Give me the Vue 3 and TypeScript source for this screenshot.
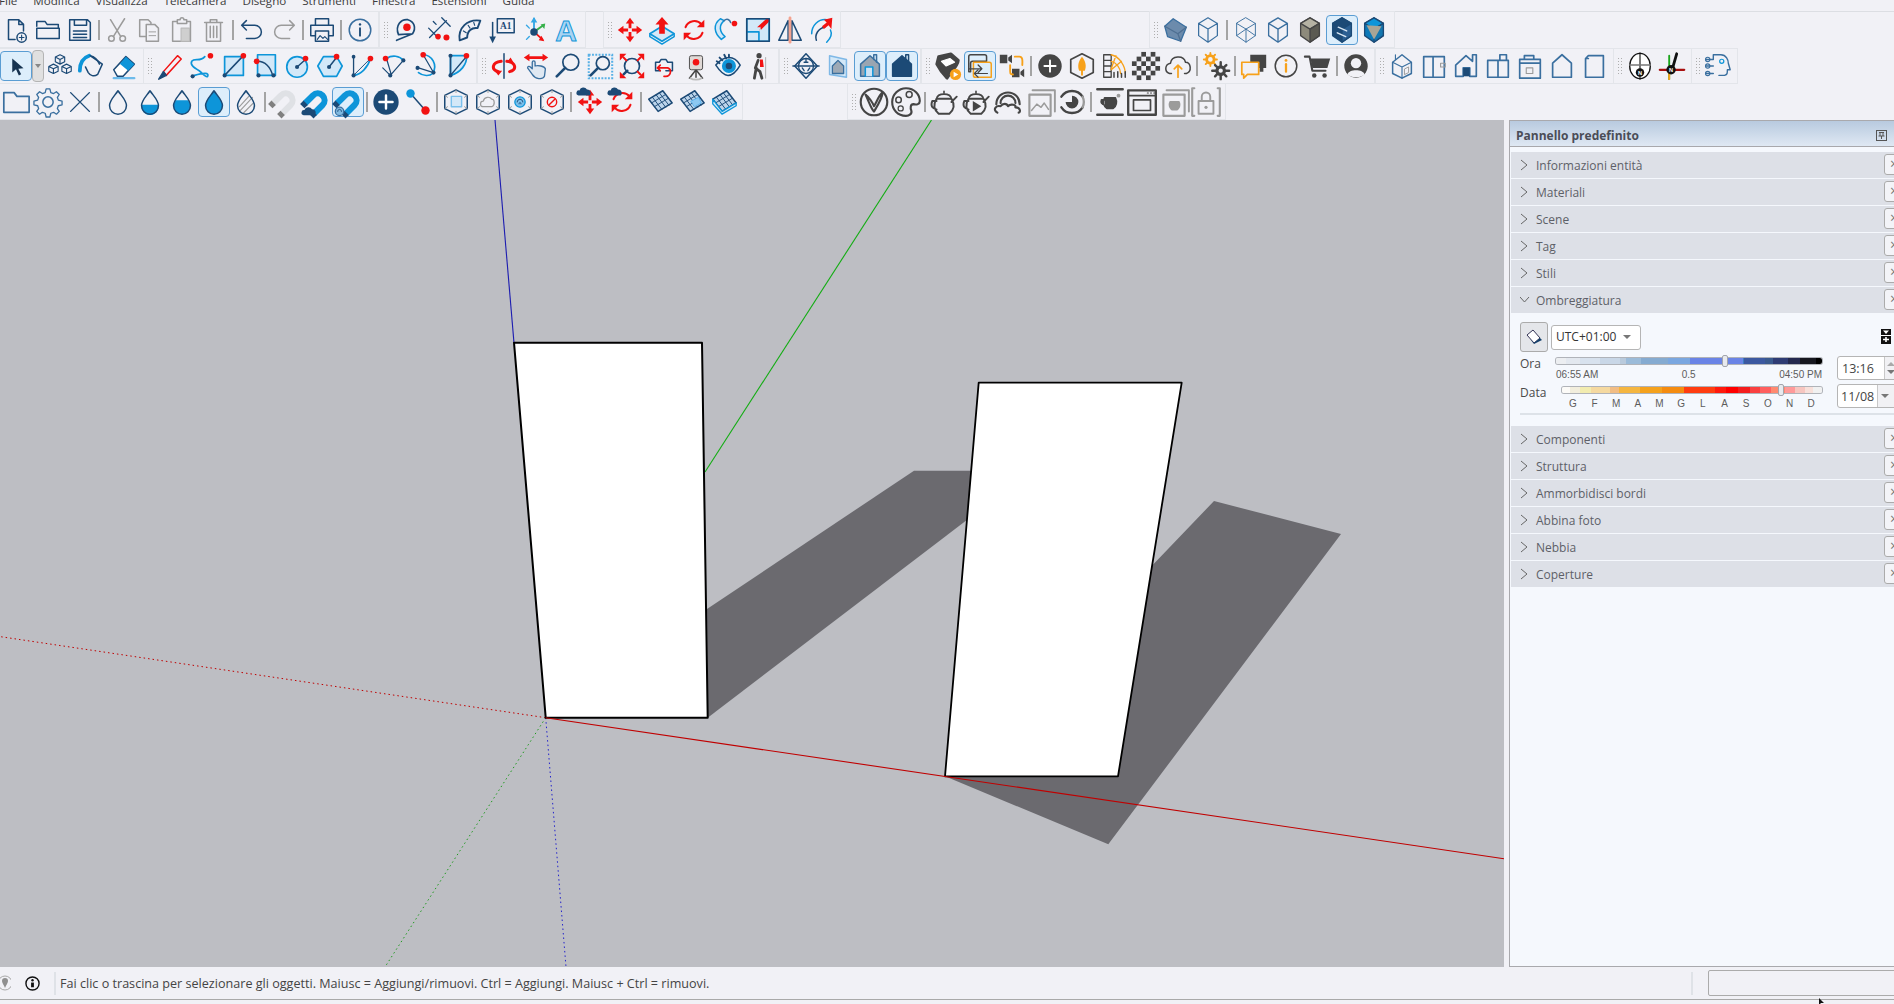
<script setup lang="ts">
interface Group {
  gap: number
  width: number
  handle?: boolean
  size?: number
  items: string[]
}

const N = '#1c4a76'
const S = '#3a6f9f'
const B = '#0d95d9'
const L = '#d3e8f8'
const R = '#f21212'
const G = '#9b9b9b'
const K = '#454545'
const O = '#f7a11a'

const l = (d: string, c = N, w = 1.6, f = 'none') =>
  `<path d="${d}" fill="${f}" stroke="${c}" stroke-width="${w}" stroke-linejoin="round" stroke-linecap="round"/>`
const f = (d: string, c = N) => `<path d="${d}" fill="${c}"/>`
const dot = (x: number, y: number, r = 2, c = N) => `<circle cx="${x}" cy="${y}" r="${r}" fill="${c}"/>`
const ring = (x: number, y: number, r: number, c = N, w = 1.6, fl = 'none') =>
  `<circle cx="${x}" cy="${y}" r="${r}" fill="${fl}" stroke="${c}" stroke-width="${w}"/>`
const spin = (body: string, a: number) => `<g transform="rotate(${a} 16 16)">${body}</g>`

const arrow4 = (() => {
  const a = f('M16 3l4.500 6h-3v5h-3V9h-3z', R)
  return a + spin(a, 90) + spin(a, 180) + spin(a, 270)
})()
const rotArrows = l('M7 13a10 10 0 0 1 17-3', R, 2.2) + f('M27 5v8h-8z', R) + l('M25 19a10 10 0 0 1-17 3', R, 2.2) + f('M5 27v-8h8z', R)
const cube = (top: string, left: string, right: string, c = S) =>
  l('M16 3l10 6v13l-10 7-10-7V9z', c, 1.4, left) + l('M16 3l10 6-10 6-10-6z', c, 1.4, top) + l('M16 15l10-6v13l-10 7z', c, 1.4, right)
const hex = (inner: string) => l('M16 3l12 6v14l-12 6-12-6V9z', N, 1.6) + l('M16 3v3M4 9l3 2M28 9l-3 2M16 29v-3M4 23l3-2M28 23l-3-2', G, 1) + inner
const drop = (inner: string) => inner + l('M16 4c4 6 9 10 9 16a9 9 0 0 1-18 0c0-6 5-10 9-16z')
const horseshoe = 'M7 17L14 10a6 6 0 0 1 8.500 8.500L15 26'
const magnet = (c: string, d: string) =>
  `<g transform="translate(-4 -3) scale(1.2)"><path d="${horseshoe}" fill="none" stroke="${c}" stroke-width="5.500"/>` +
  `<path d="M7.500 16.500L4.500 19.500M15.500 25.500L12.500 28.500" fill="none" stroke="${d}" stroke-width="5.500"/></g>`
const cloud = (x: number, y: number, s: number) =>
  `<g transform="translate(${x} ${y}) scale(${s})">${f('M2 10a3 3 0 0 1 1-6 5 5 0 0 1 9-1 4 4 0 0 1 3 7z')}</g>`
const gridPlane = (extra: string) =>
  l('M4 13L19 4l10 13-15 9z', N, 1.6, '#bcd4ea') + l('M8 11l10 13M12 8.500l10 13M15.500 6.500l10 13M7 17l15-9M10 21l15-9', N, 1) + extra
const house = (fl: string, c = N) => l('M6 14l10-9 10 9v13H6z', c, 1.6, fl) + l('M20 9V4h3v8', c, 1.6)
const teapot = (inner = '') =>
  l('M9 13h14c3 5 3 10-2 14H11c-5-4-5-9-2-14zM9 15H5c-2 5 0 7 4 8M23 16l5-5', K, 1.8) + l('M9 13c1-6 13-6 14 0M16 6v1', K, 1.6) + inner
const arcBase = l('M7 6v20', N, 1.4)

const icons: Record<string, string> = {
  new: l('M19 5H8v21h7M19 5l5 5v7M19 5v5h5') + ring(22, 24, 5) + l('M22 21.500v5M19.500 24h5', N, 1.2),
  open: l('M4 12V7h9l2 3h12v3M4 14h24v11H4z'),
  save: l('M5 5h19l3 3v19H5zM10 5v6h13V5M9 17h14M9 20.500h14M9 24h14'),
  cut: ring(9, 25, 3, G) + ring(21, 25, 3, G) + l('M11 23L23 4M19 23L8 5', G),
  copy: l('M5 5h9l3 3v15H5z', G) + l('M12 10h9l4 4v14H12z', G, 1.6, '#f1f1f6') + l('M15 18h7M15 22h7', G, 1),
  paste: l('M10 7H6v21h19V7h-4M11 9V5h3a2 2 0 0 1 4 0h3v4z', G) + l('M15 14h9v14h-9z', '#bbb', 1.2, '#cfcfcf'),
  trash: l('M8 9v19h15V9M6 8h19M12 8V5h7v3M12 12v12M15.500 12v12M19 12v12', G),
  undo: l('M6 11h13a7 7 0 0 1 0 14h-9M10 6l-5 5 5 5'),
  redo: l('M26 11H13a7 7 0 0 0 0 14h9M22 6l5 5-5 5', G),
  print: l('M9 11V4h14v7M9 22H4V11h24v11h-5M9 17h14v11H9z') + l('M11 26l3-4 3 3 2-2 3 3', N, 1.2),
  info: ring(16, 16, 11.500, S) + l('M16 14v8', N, 2) + dot(16, 10, 1.3),
  tape: l('M8 21C4 11 11 4 18 5c7 2 9 9 5 15zM6 27l17-7', N, 1.8) + dot(17, 13, 4, R),
  dims: l('M7 24L25 6M6 14l11 11M20 3l9 9', N, 1.4) + dot(25, 24, 3.2, R) + dot(16, 23, 3, R) + l('M11 7l3 3', N, 1.4),
  protractor: l('M5 27C3 14 13 4 27 6l-3 8c-6-1-11 3-11 10z', N, 2) + l('M9 17l3 2M14 11l2 3M20 8l1 3', N, 1.2),
  label: l('M11 4h18v15H11z') + `<text x="20" y="15" font-family="Liberation Serif" font-size="10" font-weight="700" text-anchor="middle" fill="${N}">A1</text>` + l('M6 8v17') + f('M2.500 23h7L6 30z'),
  axes: l('M16 18V4', '#35a7e5', 2) + f('M16 2l3.500 6h-7z', '#35a7e5') + l('M16 18l10-7', '#36b04a', 2) + f('M28 9l-1 6-4-5z', '#36b04a') + l('M16 18l9 8', R, 2) + f('M27 28l-6-1 3-5z', R) + l('M8 11l3 3M8 26l3-3', '#35a7e5', 1.5) + dot(16, 18, 4),
  text3d: `<text x="16" y="28" font-family="Liberation Sans" font-size="32" font-weight="700" text-anchor="middle" fill="#a9d4f2" stroke="${B}" stroke-width="1">A</text>`,
  move: arrow4,
  push: l('M3 20l13-8 13 8-13 8z', B, 1.8, L) + l('M3 21v2l13 8 13-8v-2', B, 1.6) + f('M16 2l7 8h-4v10h-6V10H9z', R),
  rotate: rotArrows,
  follow: l('M10 4C2 10 3 19 11 26l4-3C9 18 8 11 14 6z', B, 1.6, L) + l('M14 6c3-3 6-1 7 2', S) + dot(25, 9, 3, R),
  scale: l('M4 4h24v24H4zM4 18h13v10', B, 1.8, L) + f('M17 18l2-5-4 0 10-9 3 0 0 3-9 9 0-4z', R) + l('M4 4h24v24H4z', N, 1.6),
  flip: l('M4 27L14 6v21z') + l('M18 6l10 21H18z') + l('M16 3v26', '#f3a28f', 3),
  offset: l('M5 20C5 11 12 4 21 5', B) + l('M10 27c-2-6 2-13 9-14', N) + l('M25 16c2 4 0 9-4 13', B) + f('M27 3l-1 12-3-4-5 4-2-3 5-4-3-3z', R),
  xray: l('M13 4l14 9-6 15-14-5-3-11z', S, 1.4, '#6c8bac') + l('M4 12l14 8 9-7M18 20l3 8', '#4e6f92', 1.4),
  wire: l('M16 3l10 6v13l-10 7-10-7V9zM6 9l10 6 10-6M16 15v14', S, 1.3),
  wire2: l('M16 3l10 6v13l-10 7-10-7V9zM6 9l10 6 10-6M16 15v14M6 22l10-7 10 7', S, 1),
  hidden: l('M16 3l10 6v13l-10 7-10-7V9zM6 9l10 6 10-6M16 15v14', S, 1.4),
  shaded: cube('#b5b2a3', '#8d8a7b', '#5b5a52', K),
  textured: cube(N, N, '#2b5f92', N) + l('M12 13l9 4M11 19l9 4', '#d8e6f3', 1.6),
  mono: cube(B, '#0b78b8', '#1477b0', N) + f('M8 11l16 1-8 14z', '#a8a596'),

  select: f('M12 8v15l4-3.500 3 6.500 2.500-1.200-3-6 5.500-.5z', '#16324f'),
  component: l('M16 4l5 2.500v5L16 14l-5-2.500v-5zM11 6.500l5 2.500 5-2.500M16 9v5M9 14l5 2.500v5L9 24l-5-2.500v-5zM4 16.500L9 19l5-2.500M9 19v5M23 14l5 2.500v5L23 24l-5-2.500v-5zM18 16.500l5 2.500 5-2.500M23 19v5', N, 1.2),
  paint: l('M14 5l13 9-5 11c-4 3-8 1-10-2l-3-6', N) + l('M13 5c-6 2-10 7-10 16', B, 4) + l('M14 5c5 1 8 4 10 9', N),
  eraser: l('M5 20L18 6l9 8-12 13H9z', N, 1.6, '#fff') + f('M11.500 13.500L18 6l9 8-6.500 7z', B) + l('M5 29h22', '#6dbbeb', 2.4),
  pencil: l('M9 22L24 5l4 3.500L12 26z', R, 1.6) + l('M4 30l5-8 3 4z', N, 1.6, N),
  freehand: l('M8 26c10-3 16-3 14 1-2 2-6-4-9-6-5-3-10-6-8-10 3-4 9 1 14-5', B, 1.8) + dot(6, 27, 2.2) + dot(25, 5, 3, R),
  rect: l('M6 6h20v20H6z', B, 1.8, L) + l('M6 26L25 6') + dot(6, 26, 2.2) + dot(26, 5, 3, R),
  rotRect: l('M7 4h19v22H7z', B, 1.8, L) + l('M7 11c8 0 14 6 16 15') + dot(8, 26, 2.2) + dot(24, 26, 2.2) + dot(6, 11, 3, R),
  circle: ring(15, 17, 11, B, 1.8, L) + l('M15 17l9-8') + dot(15, 17, 2.2) + dot(24, 8, 3, R),
  polygon: l('M9 6h14l6 10-6 11H9L3 16z', B, 1.8, L) + l('M15 17l8-10') + dot(15, 17, 2.2) + dot(23, 6, 3, R),
  arc1: arcBase + l('M7 26c8-1 15-8 18-18', B, 1.8) + l('M7 26L25 8', N, 1) + dot(7, 6, 2) + dot(7, 26, 2.2) + dot(25, 8, 3, R),
  arc2: l('M8 8c6-4 14-3 18 2', B, 1.8) + l('M8 8l5 17 13-15M4 18l8 8', N, 1.3) + dot(7, 8, 3, R) + dot(26, 10, 2.2) + dot(12, 26, 2.2),
  arc3: l('M13 4c9 0 16 11 10 20-3 3-10 3-15-1', B, 1.8) + l('M13 4l11 19-16-5', N, 1.3) + dot(13, 4, 3, R) + dot(24, 23, 2.2) + dot(7, 18, 2.2),
  pie: l('M8 5h17c1 9-6 18-17 21z', B, 1.8, L) + l('M8 26L25 6M8 5v21') + dot(8, 5, 2.2) + dot(8, 26, 2.2) + dot(25, 5, 3, R),
  orbit: l('M16 3v26', N, 1.6) + l('M13 11C3 12 2 20 10 22M19 11c10 1 11 9 3 11', R, 3.2) + f('M6 21h8l-4 5zM19 12l7 0-3-5z', R),
  pan: l('M12 25l-5-7c0-2 2-2 3-1l2 2v-7c0-2 3-2 3 0v4c3-1 10 0 11 3l-1 8c-2 4-10 3-13-2z', S, 1.4, '#dfe8f2') + f('M3 7l6-4v2.500h14V3l6 4-6 4V8.500H9V11z', R),
  zoom: ring(19, 12, 8.500, N, 1.8) + l('M13 18L4 27', N, 2.8),
  zoomWin: `<path d="M4 4h25v25H4z" fill="none" stroke="#57b0e6" stroke-width="2.200" stroke-dasharray="2 1.500"/>` + ring(19, 13, 7, N, 1.8) + l('M14 18l-8 8', N, 2.8),
  extents: ring(16, 16, 8, N, 1.8) + l('M11 21l-4 4', N, 2.6) + l('M7 7l3 3M25 7l-3 3M25 25l-3-3', R, 2.2) + f('M3 3h7l-7 7zM29 3v7l-7-7zM29 29h-7l7-7zM3 29v-7l7 7z', R),
  prev: l('M7 12h4l2-3h5l2 3h5v9h-7M7 12v9h5', N, 1.6) + l('M12 15l-3 3 3 3M9 18h11c5 2 3 9-2 9h-2', R, 1.8),
  camera: l('M16 20L9 29M16 20l7 9M16 20v8', K, 1.6) + `<rect x="9" y="5" width="14" height="15" rx="2" fill="#e0d9d6" stroke="${K}"/>` + dot(16, 12, 3.500, R) + l('M10 29c3 2 9 2 12 0', '#bbb', 2),
  eye: l('M3 15c5-6 10-8 14-8 5 0 9 3 12 8-4 7-8 11-13 11-5 0-9-5-13-11z', N, 1.6, '#eaf3fa') + dot(17, 16, 7.500, B) + dot(17, 16, 3.500, N) + l('M4 11l3 2M7 7l3 3M12 4l2 4M17 4v3', N, 2),
  walk: dot(15, 5, 2.800, K) + l('M14 10l-3 8 5 4 2 7M12 18l-2 11', K, 3) + f('M16 9h3l1 8h-4z', R) + l('M22 7v22', '#aaa', 1),
  section: l('M4 16L16 3l12 13-12 13z', N, 1.6) + ring(16, 16, 8, N, 1.4) + l('M2 16h28M16 8v4M12 18l2 3M20 18l-2 3M14 12h4', N, 1.4),
  housePlane: l('M7 5l18 4v19L7 25z', '#7fb8e6', 1.6, L) + l('M10 16l6-6 6 6v8H10z', S, 1.4, '#9ea9b5'),
  houseGrey: house('#9aa5b1', S) + l('M11 27V17h8v10', B, 1.6, '#cde3f5'),
  houseNavy: house(N),
  scene: l('M6 6l13-3 8 7c0 5-8 13-12 19C10 24 6 18 4 14z', K, 3, K) + l('M9 11l9-3 5 4-9 4z', '#fff', 1.2, '#fff') + dot(24, 25, 6, O) + f('M22 22v6l5-3z', '#fff'),
  sceneSwap: l('M6 4h15a2 2 0 0 1 2 2v5H8a2 2 0 0 0-2 2v9H4V6a2 2 0 0 1 2-2z', K, 1.6) + l('M9 12h17a2 2 0 0 1 2 2v14H11a2 2 0 0 1-2-2z', O, 1.6) + l('M4 19h14M14 15l4 4-4 4', K, 1.4) + l('M24 24H10M14 20l-4 4 4 4', K, 1.2),
  cams: f('M3 4h8v9H3zM12 7l4-3v9l-4-3zM16 19h8v9h-8zM25 22l4-3v9l-4-3z', K) + l('M19 6h5c4 0 3 6 3 9M14 15v5c0 4 0 5 3 5', O, 2),
  plus: dot(16, 16, 12.500, K) + l('M16 10v12M10 16h12', '#fff', 2),
  hexFlame: l('M16 3l12 6v14l-12 6-12-6V9z', K, 1.8) + f('M16 6c4 5 5 10 3 15h-2v5h-2v-5h-2c-2-5-1-10 3-15z', O),
  swatch: l('M5 4h8v24H5zM5 10h8M5 16h8M5 22h8', K, 1.4) + l('M13 4c9 2 15 12 15 20M13 11c5 1 10 7 10 13M18 5l-5 14M24 11l-11 9', O, 1.4) + l('M16 28v-5M20 28v-6M24 28v-4M28 28v-6', K, 1.6),
  checker: (() => {
    let s = ''
    const step = 5
    for (let y = 0; y < 6; y++) for (let x = 0; x < 6; x++) {
      if ((x + y) % 2 === 0 && Math.hypot(x - 2.5, y - 2.5) < 3.3) s += `<rect x="${1 + x * step}" y="${1 + y * step}" width="${step}" height="${step}" fill="${K}"/>`
    }
    return s
  })(),
  upload: l('M9 24H7c-6-2-5-10 1-11 1-8 14-9 16-1 6 0 7 10 1 12h-2', K, 1.6) + l('M16 28V15M12 19l4-4 4 4', O, 1.8),
  gears: ring(10, 9, 4, O, 3) + l('M10 2v3M10 13v3M3 9h3M14 9h3M5 4l2 2M13 12l2 2M15 4l-2 2M5 14l2-2', O, 2) + ring(21, 21, 4, K, 3.400) + l('M21 12v4M21 26v4M12 21h4M26 21h4M15 15l2 2M25 25l2 2M27 15l-2 2M17 25l-2 2', K, 2.600),
  chat: f('M12 4h17v14h-3v4h-4v-4H12z', K) + l('M3 12h18v13H9l-4 4v-4H3z', O, 1.8, '#f1f1f6'),
  infoO: ring(16, 16, 11.500, K, 1.6) + l('M16 14v8', O, 2.4) + dot(16, 10, 1.5, O),
  cart: l('M2 6h5l3 15h14', K, 2.2) + f('M8 8h21l-3 10H10z', K) + dot(12, 26, 2.4, K) + dot(23, 26, 2.4, K),
  user: dot(16, 16, 12.500, K) + dot(16, 13, 5.500, '#f1f1f6') + f('M7 25c1-6 17-6 18 0-4 4-14 4-18 0z', '#f1f1f6'),
  modelHouse: l('M6 12l10-8 10 8v12l-10 5-10-5z', S) + l('M6 12l10 5 10-5M16 17v12M9 4v5', S, 1.2) + l('M19 19l4-2v6l-4 2z', G, 1),
  panelA: l('M5 6h22v22H5zM15 6v22', S, 1.8) + l('M23 13h5v4h-5z', G, 1.2),
  panelB: l('M5 27V15L16 5l7 6V4h4v23h-7v-9h-7v9z', S, 1.8) + f('M13 18h7v9h-7z', N),
  panelC: l('M5 10h22v18H5zM16 10v18M18 10V4h7v6', S, 1.8),
  panelD: l('M5 9h22v20H5zM5 13h22M10 9V5h10v4', S, 1.8) + l('M12 18h7v6h-7z', G, 1.2),
  panelE: l('M6 28V13L16 4l10 9v15z', S, 1.8),
  panelF: l('M7 28V8l3-3h16v23zM7 8h3', S, 1.8),
  compass: `<ellipse cx="16" cy="16" rx="11" ry="13.500" fill="#fff" stroke="#111" stroke-width="1.400"/>` + l('M16 2v28', '#111', 1.2) + l('M5 15h22', '#777', 1.6) + dot(16, 23, 4.500, '#111') + `<text x="16" y="25.500" font-family="Liberation Sans" font-size="6" font-weight="700" text-anchor="middle" fill="#fff">N</text>`,
  northTool: l('M3 20h26', '#a80f0f', 2.400) + l('M13 5v25', '#1aa51a', 2) + l('M13 22v8', O, 2) + l('M21 3l-4 14', '#111', 3) + dot(15, 20, 5, '#111') + `<text x="15" y="22.500" font-family="Liberation Sans" font-size="6" font-weight="700" text-anchor="middle" fill="#fff">N</text>`,
  brain: l('M11 4h8c6 0 8 6 8 9l2 7h-3c0 4 0 5-3 6h-6M3 9h8M11 4v5M11 24H3M11 16H3', S, 1.5) + ring(5, 9, 2.300, S, 1.2) + ring(5, 16, 2.300, S, 1.2) + ring(5, 24, 2.300, S, 1.2) + ring(20, 11, 2.200, B, 1.3),

  folder: l('M3 6h11l3 4h13v17H3z', S, 1.8),
  gear: l('M14 2h4l1 4 3 1 3-2 3 3-2 3 1 3 4 1v4l-4 1-1 3 2 3-3 3-3-2-3 1-1 4h-4l-1-4-3-1-3 2-3-3 2-3-1-3-4-1v-4l4-1 1-3-2-3 3-3 3 2 3-1z', S, 1.4) + ring(16, 16, 5.500, S, 1.6),
  cross: l('M6 6l20 20M26 6L6 26', N, 1.5),
  dropEmpty: drop(''),
  dropHalf: drop(f('M7.200 19h17.600a9 9 0 1 1-17.600 0z', B)),
  dropMost: drop(f('M9.500 14h13c1.500 2 2.500 4 2.500 6a9 9 0 0 1-18 0c0-2 1-4 2.500-6z', B)),
  dropFull: f('M16 4c4 6 9 10 9 16a9 9 0 0 1-18 0c0-6 5-10 9-16z', B) + l('M16 4c4 6 9 10 9 16a9 9 0 0 1-18 0c0-6 5-10 9-16z'),
  dropHatch: drop(l('M9 21L19 10M9 26l14-15M13 28l11-11', G, 1.2)),
  magnetOff: magnet('#dfe1e5', '#7f7f7f'),
  magnetCloud: magnet(B, N) + cloud(1, 21, 0.9),
  magnetPrint: magnet(B, N) + ring(7, 26, 4.500, S, 1.4, '#7fb9e0') + l('M5 26c0-3 4-3 4 0', N, 1),
  plusNavy: dot(16, 16, 13.500) + l('M16 9v14M9 16h14', '#fff', 2.600),
  tapeLine: l('M9 8l14 16') + dot(8, 7, 4.500, B) + dot(24, 25, 4.500, R),
  hexBox: hex(l('M11 10h11v11H11z', '#7ac0ec', 1.5, L)),
  hexCloud: hex(l('M11 21a3 3 0 0 1 0-6c1-5 7-5 9-2 3 0 4 6 0 8z', G, 1.3)),
  hexPrint: hex(ring(16, 16, 5.500, B, 1.4, '#7cc1ec') + l('M13 16c0-4 6-4 6 0M15 18c0-2 2-2 2 0', N, 1)),
  hexStop: hex(ring(16, 16, 5, R, 1.5) + l('M13 19l6-6', R, 1.5)),
  cloudMove: arrow4 + cloud(2, 0, 0.9),
  cloudRotate: rotArrows + cloud(1, 0, 0.9),
  grid1: gridPlane(''),
  grid2: gridPlane(l('M15 15l8-4 3 6-7 4z', '#58b0ec', 1, '#8cc8f2')),
  grid3: gridPlane(l('M4 13v5l10 11 15-9v-3L14 26z', B, 1.4, L)),
  vray: ring(16, 16, 12.500, K, 2) + l('M8 9c3 6 5 13 8 16 3-5 8-13 8-18-3 2-6 10-8 13-1-3-5-9-8-11z', K, 2),
  palette: l('M16 3c8 0 13 6 13 12 0 3-3 4-6 3-3 0-3 4-2 6 1 3-2 5-5 5C8 29 3 23 3 16S9 3 16 3z', K, 2) + ring(19, 9, 2.800, K, 1.4) + ring(9, 14, 2.600, K, 1.4) + ring(11, 22, 2.400, K, 1.2),
  teapot: teapot(),
  teapotPlay: teapot(f('M13 15l8 5-8 5z', K)),
  clouds: l('M5 18a11 11 0 0 1 22 0M9 17a7 7 0 0 1 14 0M6 26c-5-3-1-7 3-6 2-3 6-3 7 0 3-3 8-1 7 1 5 0 5 5 3 5', K, 2),
  frames: l('M6 9h20v20H6z', G, 2) + l('M9 5h21v20', G, 1.8) + l('M8 24l5-6 4 3 3-4 4 6', G, 1.4),
  rings: l('M6 11A12 12 0 0 1 26 11M6 21a12 12 0 0 0 20 0', K, 2.2) + l('M26 21a12 12 0 0 0 0-10', G, 2.2) + f('M16 10a6 6 0 1 1-6 6h6z', K),
  teaFrame: l('M4 4h24M4 28h24', K, 2.2) + l('M11 12h10c2 4 1 8-2 10h-6c-3-2-4-6-2-10zM11 14H8c-1 3 0 4 3 5', K, 1.6, K) + dot(24, 10, 1.8, G),
  window: l('M3 5h26v23H3z', K, 2.2) + l('M3 10h26M8 14h16v10H8z', K, 1.6) + l('M21 7.500h1M24 7.500h1M27 7.500h1', K, 1),
  teaGrey: l('M6 9h20v20H6z', G, 2) + l('M9 5h21v20', G, 1.8) + f('M12 15h9c2 3 1 7-2 9h-5c-3-2-4-6-2-9z', G),
  lock: l('M5 3H3v26h2M27 3h2v26h-2', G, 2) + l('M9 15h14v12H9zM12 15v-4a4 4 0 0 1 8 0v4', G, 1.8) + dot(16, 21, 1.5, G),
}

const rows: Group[][] = [
  [
    { gap: 0, width: 378, items: ['new', 'open', 'save', '|', 'cut', 'copy', 'paste', 'trash', '|', 'undo', 'redo', '|', 'print', '|', 'info'] },
    { gap: 2, width: 205, handle: true, items: ['tape', 'dims', 'protractor', 'label', 'axes', 'text3d'] },
    { gap: 19, width: 236, handle: true, items: ['move', 'push', 'rotate', 'follow', 'scale', 'flip', 'offset'] },
    { gap: 310, width: 243.5, handle: true, items: ['xray', 'wire', '|', 'wire2', 'hidden', 'shaded', 'textured!', 'mono'] },
  ],
  [
    { gap: 0, width: 143, items: ['select!', 'drop', 'component', 'paint', 'eraser'] },
    { gap: 1, width: 332, handle: true, items: ['pencil', 'freehand', 'rect', 'rotRect', 'circle', 'polygon', 'arc1', 'arc2', 'arc3', 'pie'] },
    { gap: 2, width: 300, handle: true, items: ['orbit', 'pan', 'zoom', 'zoomWin', 'extents', 'prev', 'camera', 'eye', 'walk'] },
    { gap: 2, width: 140, handle: true, items: ['section', 'housePlane', 'houseGrey!', 'houseNavy!'] },
    { gap: 2, width: 452, handle: true, items: ['scene', 'sceneSwap!', 'cams', '|', 'plus', 'hexFlame', 'swatch', 'checker', 'upload', '|', 'gears', '|', 'chat', 'infoO', 'cart', '|', 'user'] },
    { gap: 2, width: 236.5, handle: true, items: ['modelHouse', 'panelA', 'panelB', 'panelC', 'panelD', 'panelE', 'panelF'] },
    { gap: 1.5, width: 76.5, handle: true, items: ['compass', 'northTool'] },
    { gap: 1.5, width: 44.5, handle: true, items: ['brain'] },
  ],
  [
    { gap: 0, width: 742, items: ['folder', 'gear', 'cross', '|', 'dropEmpty', 'dropHalf', 'dropMost', 'dropFull!', 'dropHatch', '|', 'magnetOff', 'magnetCloud', 'magnetPrint!', '|', 'plusNavy', 'tapeLine', '|', 'hexBox', 'hexCloud', 'hexPrint', 'hexStop', '|', 'cloudMove', 'cloudRotate', '|', 'grid1', 'grid2', 'grid3'] },
    { gap: 106, width: 377, handle: true, size: 34, items: ['vray', 'palette', '|', 'teapot', 'teapotPlay', 'clouds', 'frames', 'rings', '|', 'teaFrame', 'window', 'teaGrey', 'lock'] },
  ],
]

const menus = ['File', 'Modifica', 'Visualizza', 'Telecamera', 'Disegno', 'Strumenti', 'Finestra', 'Estensioni', 'Guida']
const traysAbove = ['Informazioni entità', 'Materiali', 'Scene', 'Tag', 'Stili']
const traysBelow = ['Componenti', 'Struttura', 'Ammorbidisci bordi', 'Abbina foto', 'Nebbia', 'Coperture']
const months = ['G', 'F', 'M', 'A', 'M', 'G', 'L', 'A', 'S', 'O', 'N', 'D']

// hard colour stops along the sun sliders, [end in px, colour]
const band = (stops: [number, string][]) => {
  let from = 0
  const parts = stops.map(([to, c]) => {
    const s = `${c} ${from}px ${to}px`
    from = to
    return s
  })
  return `linear-gradient(90deg, ${parts.join(', ')})`
}
const timeBand = band([
  [10, '#eceef1'], [24, '#e3e8ef'], [44, '#d8e2ee'], [64, '#c9d7e7'], [70, '#b9cadc'], [85, '#9bbbd9'],
  [112, '#85abd1'], [134, '#7aa7e0'], [170, '#6a84e6'], [187, '#6a84e6'], [188, '#3b7cc0'], [209, '#3c59a0'],
  [217, '#3a5a8e'], [232, '#2f3c74'], [244, '#24294f'], [260, '#16171f'], [266, '#000'],
])
const dateBand = band([
  [8, '#fcfbf8'], [18, '#f2eedd'], [29, '#f2ecb0'], [48, '#f5d9a0'], [57, '#f2bd84'], [78, '#f5b640'],
  [100, '#f5a21d'], [122, '#f58c10'], [153, '#ff3d10'], [164, '#ff1a0d'], [176, '#ff0000'], [188, '#f41d1d'],
  [198, '#fa4040'], [209, '#ff5f5f'], [223, '#ff8a70'], [233, '#ff9a9a'], [243, '#f7c6c0'], [251, '#f8e0da'], [260, '#f1f1f1'],
])

const iconName = (item: string) => item.replace('!', '')
</script>

<template>
  <div class="app">
    <div class="menu">
      <span v-for="m in menus" :key="m" class="menu-item">{{ m }}</span>
    </div>

    <div class="toolbars">
      <div v-for="(row, r) in rows" :key="r" class="tool-row">
        <div
          v-for="(g, i) in row"
          :key="i"
          class="tool-group"
          :style="{ marginLeft: g.gap + 'px', width: g.width + 'px' }"
        >
          <span v-if="g.handle" class="handle"></span>
          <template v-for="(item, k) in g.items" :key="k">
            <span v-if="item === '|'" class="sep"></span>
            <span v-else-if="item === 'drop'" class="drop-btn"></span>
            <span v-else class="tool" :class="{ active: item.endsWith('!') }">
              <svg viewBox="0 0 32 32" :width="g.size ?? 30" :height="g.size ?? 30" v-html="icons[iconName(item)]"></svg>
            </span>
          </template>
        </div>
      </div>
    </div>

    <div class="main">
      <div class="viewport">
        <svg class="scene" viewBox="0 120 1504 847" width="1504" height="847">
          <line x1="495" y1="120" x2="514" y2="343" stroke="#1c1cb0" stroke-width="1.100" />
          <line x1="931.500" y1="120" x2="705" y2="472" stroke="#12ad12" stroke-width="1.100" />
          <line x1="545.700" y1="717.700" x2="0" y2="636.600" stroke="#c00000" stroke-width="1" stroke-dasharray="1.500 3" />
          <line x1="545.700" y1="717.700" x2="385" y2="967" stroke="#1f9a1f" stroke-width="1" stroke-dasharray="1.500 3" />
          <line x1="545.700" y1="717.700" x2="566" y2="967" stroke="#2222cc" stroke-width="1" stroke-dasharray="1.500 3" />

          <polygon points="707,609 914,470.700 980,470.700 980,510 707.700,717.700" fill="#6b6a6f" />
          <polygon points="945,776.300 1108.300,844.300 1341,534 1214,501 1100,620 1000,700" fill="#6b6a6f" />

          <polygon points="514,342.700 702,342.700 707.700,717.700 545.700,717.700" fill="#fff" stroke="#000" stroke-width="2" stroke-linejoin="round" />
          <polygon points="978.700,382.700 1181.700,382.700 1118,776.300 945,776.300" fill="#fff" stroke="#000" stroke-width="1.800" stroke-linejoin="round" />

          <line x1="545.700" y1="717.700" x2="1504" y2="858.700" stroke="#c00000" stroke-width="1.100" />
        </svg>
      </div>

      <aside class="panel">
        <header class="panel-title">
          <span>Pannello predefinito</span>
          <svg class="pin" viewBox="0 0 11 11" width="11" height="11">
            <rect x="0.500" y="0.500" width="10" height="10" fill="none" stroke="#555" />
            <path d="M3 2.500h5M4 2.500v3.500M7 2.500v3.500M2.500 6h6M5.500 6v3" fill="none" stroke="#555" />
          </svg>
        </header>

        <div class="trays">
          <div v-for="t in traysAbove" :key="t" class="tray">
            <svg class="chev" viewBox="0 0 8 12" width="16" height="12" preserveAspectRatio="xMinYMid meet"><path d="M1 1l6 5-6 5" fill="none" stroke="#666" /></svg>
            <span>{{ t }}</span>
            <span class="tray-close">×</span>
          </div>
          <div class="tray">
            <svg class="chev" viewBox="0 0 16 8" width="16" height="8" preserveAspectRatio="xMinYMid meet"><path d="M0 1l4.500 5L9 1" fill="none" stroke="#666" /></svg>
            <span>Ombreggiatura</span>
            <span class="tray-close">×</span>
          </div>

          <div class="shadow-body">
            <div class="shadow-top">
              <button class="shadow-btn">
                <svg viewBox="0 0 20 20" width="20" height="20">
                  <path d="M3 8l6-5 7 8-6 5z" fill="#fff" stroke="#335" />
                  <path d="M6 12l4 5 8-4-2-2-6 5z" fill="#123f6b" />
                </svg>
              </button>
              <div class="tz-select">UTC+01:00 <span class="tri"></span></div>
              <svg class="expand" viewBox="0 0 10 15" width="10" height="15">
                <rect width="10" height="15" fill="#111" />
                <path d="M2 1.500h6L5 5z" fill="#fff" />
                <path d="M2 10.500h6M5 8v5" stroke="#fff" stroke-width="1.600" />
                <rect y="6" width="10" height="1" fill="#fff" />
              </svg>
            </div>

            <div class="sun-row">
              <span class="sun-label">Ora</span>
              <div class="sun-col">
                <div class="track" :style="{ background: timeBand }"><i class="thumb thumb-time"></i></div>
                <div class="scale-labels"><span>06:55 AM</span><span>0.5</span><span>04:50 PM</span></div>
              </div>
              <div class="field">
                <span class="field-value">13:16</span>
                <span class="spin-box"><i class="tri up"></i><i class="tri"></i></span>
              </div>
            </div>

            <div class="sun-row date-row">
              <span class="sun-label">Data</span>
              <div class="sun-col date-col">
                <div class="track" :style="{ background: dateBand }"><i class="thumb thumb-date"></i></div>
                <div class="months"><span v-for="(m, i) in months" :key="i">{{ m }}</span></div>
              </div>
              <div class="field">
                <span class="field-value short">11/08</span>
                <span class="date-arrow"><i class="tri"></i></span>
              </div>
            </div>

            <div class="rule"></div>
          </div>

          <div v-for="t in traysBelow" :key="t" class="tray">
            <svg class="chev" viewBox="0 0 8 12" width="16" height="12" preserveAspectRatio="xMinYMid meet"><path d="M1 1l6 5-6 5" fill="none" stroke="#666" /></svg>
            <span>{{ t }}</span>
            <span class="tray-close">×</span>
          </div>
        </div>
      </aside>
    </div>

    <footer class="status">
      <span class="status-icons">
        <svg viewBox="0 0 12 16" width="12" height="16" class="geo">
          <circle cx="6" cy="8" r="7" fill="none" stroke="#a9a9a9" />
          <path d="M6 3a3 3 0 0 1 3 3c0 2-2 4-3 7-1-3-3-5-3-7a3 3 0 0 1 3-3z" fill="#8f8f8f" />
        </svg>
        <svg viewBox="0 0 16 16" width="15" height="15" class="status-info">
          <circle cx="8" cy="8" r="7" fill="none" stroke="#111" stroke-width="1.500" />
          <circle cx="8" cy="4.600" r="1.300" fill="#111" />
          <path d="M6.500 7h3v5h-3z" fill="#111" />
        </svg>
      </span>
      <span class="status-sep"></span>
      <span class="status-text">Fai clic o trascina per selezionare gli oggetti. Maiusc = Aggiungi/rimuovi. Ctrl = Aggiungi. Maiusc + Ctrl = rimuovi.</span>
      <span class="status-sep right-sep"></span>
      <span class="measure-box"></span>
    </footer>

    <svg class="cursor" viewBox="0 0 8 8" width="8" height="8"><path d="M1 0v7l2-2 3 0z" fill="#111" /></svg>
  </div>
</template>

<style scoped>
.app {
  position: relative;
  width: 1894px;
  height: 1004px;
  overflow: hidden;
  display: flex;
  flex-direction: column;
  background: #f1f1f6;
  font-family: "Open Sans", "Liberation Sans", sans-serif;
  font-size: 12px;
  color: #444;
}

.menu {
  height: 11px;
  flex: none;
  display: flex;
  align-items: flex-end;
  overflow: hidden;
  padding: 0 0 2px;
  box-sizing: border-box;
  margin-left: -9px;
  color: #3c3c3c;
  font-size: 11.6px;
}

.menu-item {
  padding: 0 8px;
  line-height: 16px;
  flex: none;
}

.toolbars {
  flex: none;
  height: 109px;
  border-top: 1px solid #dcdee3;
  box-sizing: border-box;
  display: flex;
  flex-direction: column;
}

.tool-row {
  height: 35px;
  flex: none;
  display: flex;
}

.tool-row:nth-child(2) {
  height: 34px;
  margin-top: 2px;
}

.tool-row:nth-child(3) {
  margin-top: 1px;
}

.tool-group {
  display: flex;
  align-items: center;
  flex: none;
  height: 100%;
  box-shadow: 0 0 0 1px #e3e5ea;
}

.handle {
  width: 10px;
  height: 18px;
  flex: none;
  background-image: radial-gradient(circle, #aeaeae 0.8px, transparent 1px);
  background-size: 3px 3px;
  background-clip: content-box;
  padding: 0 2px;
  box-sizing: border-box;
}

.sep {
  flex: none;
  width: 6px;
  height: 20px;
  display: flex;
  justify-content: center;
}

.sep::after {
  content: "";
  width: 2px;
  background: #a4a4a4;
}

.tool {
  flex: none;
  width: 32px;
  height: 30px;
  display: flex;
  align-items: center;
  justify-content: center;
  box-sizing: border-box;
  border: 1px solid transparent;
  border-radius: 4px;
}

.tool svg {
  flex: none;
  overflow: visible;
}

.tool.active {
  background: #ddeefb;
  border-color: #5a9dd3;
}

.drop-btn {
  flex: none;
  width: 12px;
  height: 32px;
  box-sizing: border-box;
  background: #e0e0e0;
  border: 1px solid #b4b4b4;
  border-radius: 4px;
  display: flex;
  align-items: center;
  justify-content: center;
}

.drop-btn::after {
  content: "";
  border: 3.5px solid transparent;
  border-top: 4px solid #888;
  border-bottom: 0;
}

.main {
  flex: 1;
  display: flex;
  min-height: 0;
}

.viewport {
  width: 1504px;
  flex: none;
  background: #bdbec3;
  overflow: hidden;
}

.scene {
  display: block;
}

.panel {
  margin-left: 5px;
  flex: 1;
  min-width: 0;
  display: flex;
  flex-direction: column;
  background: #f5f8fd;
  border-left: 1px solid #a9a9ad;
  border-top: 1px solid #a9a9ad;
  border-bottom: 1px solid #a9a9ad;
  overflow: hidden;
}

.panel-title {
  flex: none;
  height: 26px;
  box-sizing: border-box;
  display: flex;
  align-items: center;
  justify-content: space-between;
  padding: 3px 7px 0 6px;
  background: linear-gradient(#b8cadf, #dfe8f3);
  border-bottom: 1px solid #a8a8ac;
  font-weight: 700;
  color: #4a4d57;
}

.trays {
  padding: 5px 0 0 1px;
  display: flex;
  flex-direction: column;
}

.tray {
  height: 26px;
  margin-bottom: 1px;
  flex: none;
  background: #dde0e7;
  display: flex;
  align-items: center;
  position: relative;
  padding-left: 9px;
  color: #5d6068;
}

.chev {
  flex: none;
}

.tray-close {
  position: absolute;
  left: 373px;
  top: 2px;
  width: 20px;
  height: 21px;
  box-sizing: border-box;
  background: #f3f4f8;
  border: 1px solid #ababab;
  border-radius: 3px;
  font-size: 14px;
  line-height: 18px;
  padding-left: 5px;
  color: #777;
}

.shadow-body {
  margin-top: -1px;
  height: 113px;
  flex: none;
  padding: 9px 0 0 9px;
  box-sizing: border-box;
  overflow: hidden;
  color: #4a4a4a;
}

.shadow-top {
  display: flex;
  align-items: center;
  height: 30px;
  position: relative;
}

.shadow-btn {
  width: 28px;
  height: 30px;
  padding: 0;
  background: #e4e6ea;
  border: 1px solid #ababab;
  border-radius: 3px;
  display: flex;
  align-items: center;
  justify-content: center;
}

.tz-select {
  margin-left: 3px;
  width: 90px;
  height: 25px;
  box-sizing: border-box;
  background: #fff;
  border: 1px solid #b5b5b5;
  border-radius: 3px;
  padding-left: 4px;
  line-height: 22px;
  color: #333;
}

.tri {
  display: inline-block;
  border: 4px solid transparent;
  border-top: 4px solid #777;
  border-bottom: 0;
  margin-left: 3px;
  vertical-align: middle;
}

.tri.up {
  border-top: 0;
  border-bottom: 4px solid #aaa;
}

.expand {
  position: absolute;
  left: 361px;
  top: 7px;
}

.sun-row {
  display: flex;
  height: 24px;
  margin-top: 4px;
}

.date-row {
  height: 25px;
}

.sun-label {
  width: 36px;
  flex: none;
  line-height: 16px;
}

.date-row .sun-label {
  padding-top: 1px;
}

.sun-col {
  width: 266px;
  flex: none;
  padding-top: 2px;
}

.date-col {
  width: 260px;
  margin-left: 6px;
  padding-top: 3px;
}

.track {
  position: relative;
  height: 6px;
  border-radius: 2px;
  box-shadow: 0 0 0 1px #b0b3b9;
}

.thumb {
  position: absolute;
  top: -3px;
  width: 6px;
  height: 12px;
  box-sizing: border-box;
  background: #e8eaee;
  border: 1px solid #a3a6ad;
  border-radius: 2px;
}

.thumb-time {
  left: 166px;
}

.thumb-date {
  left: 216px;
}

.scale-labels {
  display: flex;
  justify-content: space-between;
  font-family: "Liberation Sans", sans-serif;
  font-size: 10px;
  line-height: 12px;
  margin-top: 5px;
  color: #5c5c5c;
}

.months {
  display: grid;
  grid-template-columns: repeat(12, 1fr);
  font-family: "Liberation Sans", sans-serif;
  font-size: 10px;
  line-height: 12px;
  text-align: center;
  margin-top: 5px;
  color: #5c5c5c;
}

.field {
  margin-left: 15px;
  width: 60px;
  height: 24px;
  flex: none;
  box-sizing: border-box;
  background: #fff;
  border: 1px solid #b5b5b5;
  border-radius: 3px;
  display: flex;
  align-items: center;
  color: #444;
}

.field-value {
  padding-left: 4px;
  width: 46px;
  box-sizing: border-box;
  font-size: 12.5px;
}

.field-value.short {
  padding-left: 3px;
  width: 39px;
}

.spin-box {
  height: 100%;
  flex: 1;
  display: flex;
  flex-direction: column;
  justify-content: center;
  gap: 4px;
  background: #f1f1f4;
  border-left: 1px solid #c8c8c8;
}

.spin-box .tri {
  margin-left: 2px;
  width: 0;
}

.date-arrow {
  height: 100%;
  flex: 1;
  display: flex;
  align-items: center;
  border-left: 1px solid #c8c8c8;
  background: #f1f1f4;
}

.rule {
  height: 2px;
  background: #dde2e8;
  margin-top: 4px;
}

.status {
  flex: none;
  height: 33px;
  box-sizing: border-box;
  display: flex;
  align-items: center;
  border-bottom: 1px solid #a9a9a9;
  color: #444;
  margin-bottom: 4px;
}

.status-icons {
  width: 54px;
  flex: none;
  display: flex;
  align-items: center;
}

.geo {
  margin-left: -1px;
}

.status-info {
  margin-left: 14px;
}

.status-sep {
  width: 2px;
  height: 23px;
  flex: none;
  background: #dfe2e7;
}

.status-text {
  margin-left: 4px;
  white-space: nowrap;
  font-size: 12.6px;
}

.right-sep {
  margin-left: auto;
}

.measure-box {
  flex: none;
  width: 190px;
  margin-left: 15px;
  margin-right: -4px;
  height: 26px;
  box-sizing: border-box;
  border: 1px solid #ababab;
  border-radius: 2px;
}

.cursor {
  position: absolute;
  left: 1818px;
  top: 998px;
}
</style>

<style>
html,
body {
  background: #dcdcdc;
}
</style>
